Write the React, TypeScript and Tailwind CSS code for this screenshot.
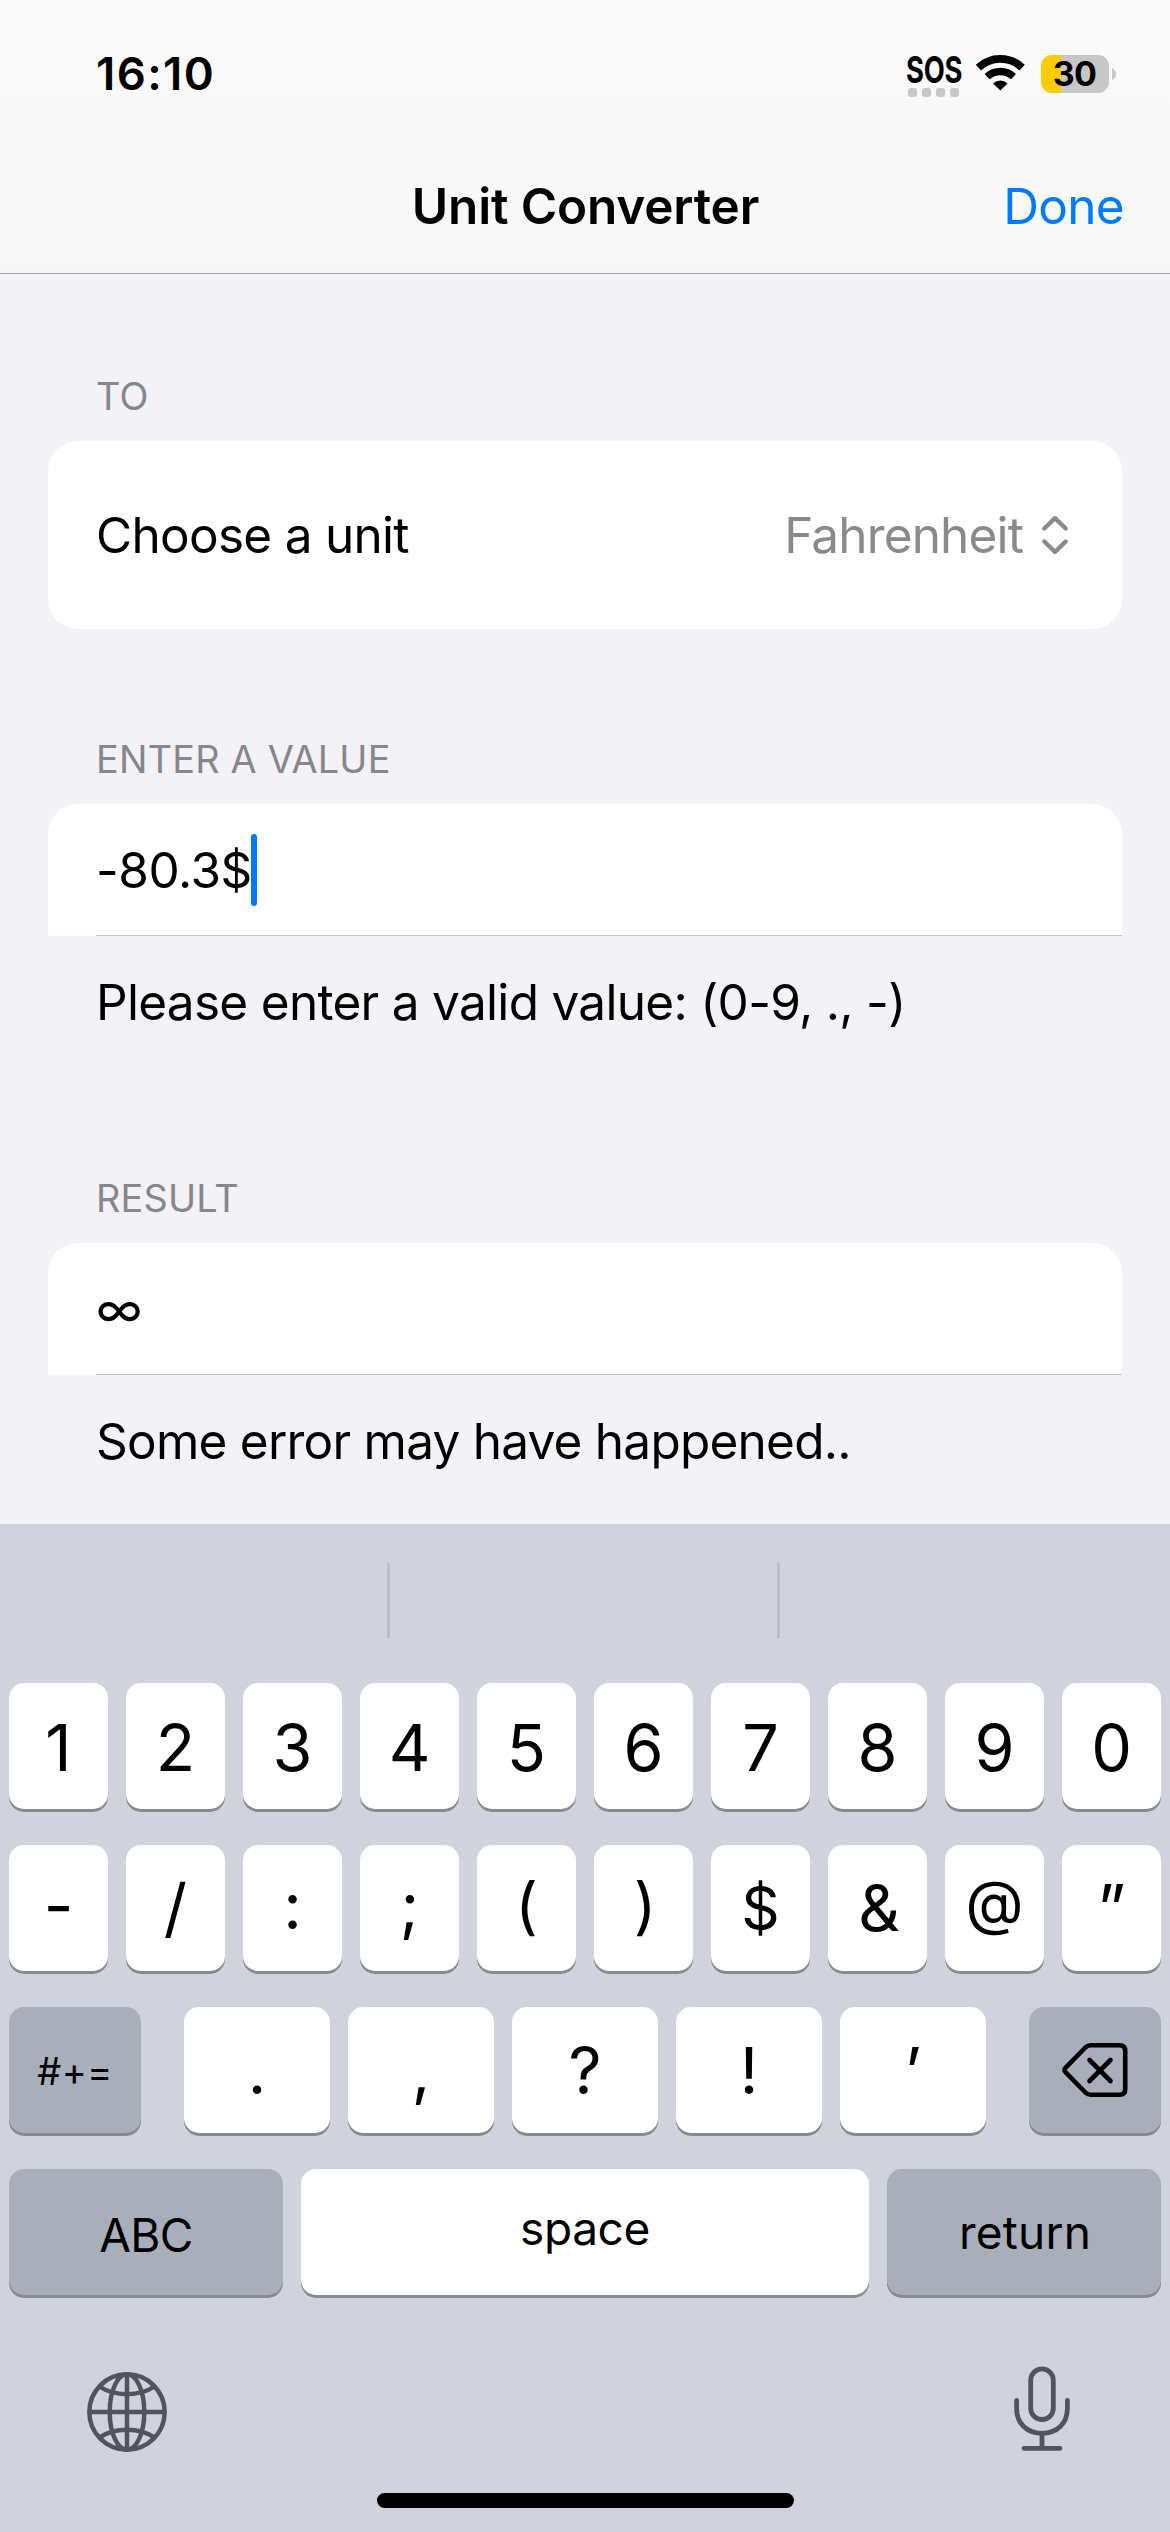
import type { ReactNode } from "react";

function WifiIcon() {
  return (
    <svg width="49" height="36" viewBox="0 0 49 36" fill="none" stroke="#000">
      <path d="M2.5 12.6A31.8 31.8 0 0 1 46.1 12.6" strokeWidth="7.8" />
      <path d="M11.1 21.7A19.3 19.3 0 0 1 37.5 21.7" strokeWidth="7.3" />
      <path d="M17.1 28.4A10.2 10.2 0 0 1 31.5 28.4L24.3 35.6Z" fill="#000" stroke="none" />
    </svg>
  );
}

function StatusBar() {
  return (
    <div className="flex h-[148px] items-center justify-between pr-[54px] pl-[96px]">
      <span className="text-[45.5px] leading-none font-semibold tracking-[1.4px]">16:10</span>
      <div className="flex items-center">
        <div className="mt-1.5 w-[55px]">
          <div className="w-[75px] origin-left scale-x-[0.74] text-[37px] leading-[26px] font-bold tracking-[-0.3px]">
            SOS
          </div>
          <div className="mt-[5px] ml-[2px] flex gap-[5px]">
            {[0, 1, 2, 3].map((i) => (
              <span key={i} className="h-[9px] w-[9px] rounded-[3px] bg-[#c7c7c7]" />
            ))}
          </div>
        </div>
        <div className="ml-[15px] -mt-[2px]">
          <WifiIcon />
        </div>
        <div className="ml-4 flex items-center gap-[3px]">
          <div className="flex h-[38px] w-[68px] items-center justify-center rounded-[11px] bg-[linear-gradient(to_right,#ffcc00_20px,#c7c7c7_20px)] pr-px text-[34px] leading-none font-bold tracking-[-0.6px]">
            30
          </div>
          <svg width="4" height="12" viewBox="0 0 4 12">
            <path d="M0 0C2.5 1 4 3.3 4 6S2.5 11 0 12Z" fill="#c7c7c7" />
          </svg>
        </div>
      </div>
    </div>
  );
}

function Header() {
  return (
    <header className="h-[274px] border-b border-[#aaaaac] bg-linear-to-b from-[#fafafb] to-[#f7f7f7]">
      <StatusBar />
      <div className="grid h-[118px] grid-cols-3 items-center text-[49.5px] leading-none">
        <span />
        <h1 className="pl-px text-center font-semibold tracking-[-0.15px] whitespace-nowrap">Unit Converter</h1>
        <button className="pr-[46px] text-right tracking-[-0.72px] text-[#007aff]">Done</button>
      </div>
    </header>
  );
}

function SectionLabel({ children }: { children: ReactNode }) {
  return (
    <h2 className="mb-[22px] pl-12 text-[37.8px] leading-[46px] tracking-[0.22px] text-[#86868b]">{children}</h2>
  );
}

function FieldRow({ children }: { children: ReactNode }) {
  return (
    <div className="flex h-[132px] flex-col rounded-t-[30px] bg-white pl-12">
      <div className="flex flex-1 items-center">{children}</div>
      <div className="h-px bg-[#c4c4c6]" />
    </div>
  );
}

function Message({ children }: { children: ReactNode }) {
  return <p className="flex h-[132px] items-center pl-12 whitespace-nowrap">{children}</p>;
}

function Form() {
  return (
    <main className="h-[1250px] px-12 pt-[99px] text-[49.5px] leading-[60px]">
      <section>
        <SectionLabel>TO</SectionLabel>
        <div className="flex h-[188px] items-center justify-between rounded-[30px] bg-white pr-[53px] pl-12">
          <span className="tracking-[-0.72px]">Choose a unit</span>
          <span className="flex items-center gap-[18px] text-[#8a8a8e]">
            <span className="tracking-[-0.85px]">Fahrenheit</span>
            <svg
              width="28"
              height="40"
              viewBox="0 0 28 40"
              fill="none"
              stroke="currentColor"
              strokeWidth="4.4"
              strokeLinecap="round"
              strokeLinejoin="round"
            >
              <path d="M3.3 13.5L14 3.2L24.7 13.5M3.3 26.5L14 36.8L24.7 26.5" />
            </svg>
          </span>
        </div>
      </section>

      <section className="mt-[107px]">
        <SectionLabel>ENTER A VALUE</SectionLabel>
        <FieldRow>
          <span className="tracking-[-0.47px]">-80.3$</span>
          <span className="-ml-px h-[72px] w-[6px] rounded-full bg-[#007aff]" />
        </FieldRow>
        <Message>
          <span className="tracking-[-0.7px]">Please enter a valid value: (0-9, ., -)</span>
        </Message>
      </section>

      <section className="mt-[107px]">
        <SectionLabel>RESULT</SectionLabel>
        <FieldRow>∞</FieldRow>
        <Message>
          <span className="tracking-[-0.76px]">Some error may have happened..</span>
        </Message>
      </section>
    </main>
  );
}

function Key({ children, className = "" }: { children: ReactNode; className?: string }) {
  return (
    <button
      className={`flex h-[126px] items-center justify-center rounded-[15px] leading-none shadow-[0_3px_0_#898a8d] ${className}`}
    >
      {children}
    </button>
  );
}

const digits = ["1", "2", "3", "4", "5", "6", "7", "8", "9", "0"];

const symbols = [
  { glyph: "-", style: "-mt-1" },
  { glyph: "/", style: "" },
  { glyph: ":", style: "-mt-1" },
  { glyph: ";", style: "-mt-1" },
  { glyph: "(", style: "text-[62px] -mt-1" },
  { glyph: ")", style: "text-[62px] -mt-1 pl-[3px]" },
  { glyph: "$", style: "text-[60px]" },
  { glyph: "&", style: "pl-[3px]" },
  { glyph: "@", style: "text-[60px] -mt-3" },
  { glyph: "”", style: "" },
];

const punctuation = [".", ",", "?", "!", "’"];

function BackspaceIcon() {
  return (
    <svg
      width="66"
      height="54"
      viewBox="0 0 66 54"
      fill="none"
      stroke="#000"
      strokeWidth="4.6"
      strokeLinecap="round"
      strokeLinejoin="round"
    >
      <path d="M28.5 2.3H57.5Q63.2 2.3 63.2 8V46Q63.2 51.7 57.5 51.7H28.5Q25.5 51.7 23.4 49.5L3.7 29.4Q1.4 27 3.7 24.6L23.4 4.5Q25.5 2.3 28.5 2.3Z" />
      <path d="M27.5 17L48.5 38M48.5 17L27.5 38" />
    </svg>
  );
}

function GlobeIcon() {
  return (
    <svg width="80" height="80" viewBox="0 0 80 80" fill="none" stroke="#50555c" strokeWidth="4.5">
      <circle cx="40" cy="40" r="37.7" />
      <ellipse cx="40" cy="40" rx="17.3" ry="37.7" />
      <path d="M40 2.3V77.7M2.3 40H77.7" />
      <path d="M12.5 14.5Q24 22.2 40 22.2T67.5 14.5M12.5 65.5Q24 57.8 40 57.8T67.5 65.5" />
    </svg>
  );
}

function MicIcon() {
  return (
    <svg
      width="56"
      height="86"
      viewBox="0 0 56 86"
      fill="none"
      stroke="#50555c"
      strokeWidth="4.8"
      strokeLinecap="round"
    >
      <rect x="16.7" y="2.9" width="22.6" height="50.6" rx="11.3" />
      <path d="M2.6 34.5V42.5C2.6 57.5 13 67.3 28 67.3S53.4 57.5 53.4 42.5V34.5" />
      <path d="M28 67.3V82M10 82.3H46" />
    </svg>
  );
}

function Keyboard() {
  return (
    <div className="h-[1008px] bg-[#d0d3db]">
      <div className="grid h-[159px] grid-cols-3 pt-[39px]">
        <div className="h-[75px] border-r-[3px] border-[#babdc5]" />
        <div className="h-[75px] border-r-[3px] border-[#babdc5]" />
        <div />
      </div>
      <div className="flex flex-col gap-9 px-[9px]">
        <div className="grid grid-cols-10 gap-[18px]">
          {digits.map((d) => (
            <Key key={d} className="bg-white pt-[4px] text-[64.6px]">
              {d}
            </Key>
          ))}
        </div>
        <div className="grid grid-cols-10 gap-[18px]">
          {symbols.map(({ glyph, style }) => (
            <Key key={glyph} className="bg-white text-[64.6px]">
              <span className={style}>{glyph}</span>
            </Key>
          ))}
        </div>
        <div className="flex justify-between">
          <Key className="w-[132px] bg-[#a9aebb] pt-[3px] text-[37.8px] tracking-[0.5px]">#+=</Key>
          <div className="flex gap-[18px]">
            {punctuation.map((p) => (
              <Key key={p} className="w-[146px] bg-white pt-[2px] text-[64.6px]">
                {p}
              </Key>
            ))}
          </div>
          <Key className="w-[132px] bg-[#a9aebb]">
            <BackspaceIcon />
          </Key>
        </div>
        <div className="flex gap-[18px] text-[46px]">
          <Key className="w-[274px] bg-[#a9aebb] pt-[6px] tracking-[-0.6px]">ABC</Key>
          <Key className="flex-1 bg-white pb-[8px] tracking-[-0.38px]">space</Key>
          <Key className="w-[274px] bg-[#a9aebb] pl-[2px] tracking-[0.2px]">return</Key>
        </div>
      </div>
      <div className="flex h-[198px] items-start justify-between pt-[71px] pr-[100px] pl-[87px]">
        <div className="pt-[6px]">
          <GlobeIcon />
        </div>
        <MicIcon />
      </div>
      <div className="mx-auto h-[15px] w-[417px] rounded-full bg-black" />
    </div>
  );
}

export default function App() {
  return (
    <div className="h-[2532px] w-[1170px] overflow-hidden bg-[#f2f2f7] font-['Inter',sans-serif] text-black">
      <Header />
      <Form />
      <Keyboard />
    </div>
  );
}
